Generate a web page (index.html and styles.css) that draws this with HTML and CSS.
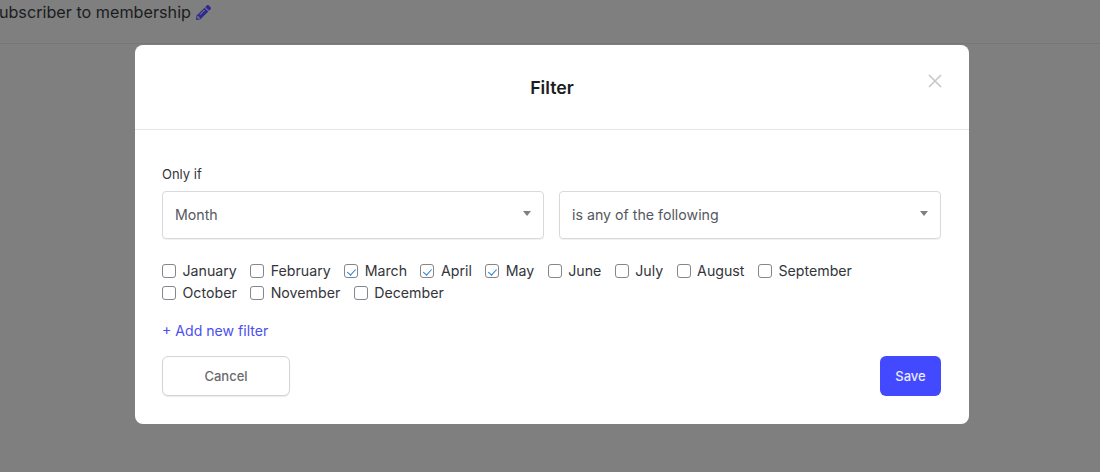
FILE: index.html
```html
<!DOCTYPE html>
<html lang="en">
<head>
<meta charset="utf-8">
<title>Filter</title>
<link rel="stylesheet" href="styles.css">
</head>
<body>
<header class="page-bar">
  <span class="page-title">Subscriber to membership</span>
  <svg class="pencil" viewBox="0 0 512 512" aria-hidden="true"><path d="M497.9 142.1l-46.1 46.1c-4.7 4.7-12.3 4.7-17 0l-111-111c-4.7-4.7-4.7-12.3 0-17l46.1-46.1c18.7-18.7 49.1-18.7 67.9 0l60.1 60.1c18.8 18.7 18.8 49.1 0 67.9zM284.2 99.8L21.6 362.4.4 483.9c-2.9 16.4 11.4 30.6 27.8 27.8l121.5-21.3 262.6-262.6c4.7-4.7 4.7-12.3 0-17l-111-111c-4.8-4.7-12.4-4.7-17.1 0zM124.1 339.9c-5.5-5.5-5.5-14.3 0-19.8l154-154c5.5-5.5 14.3-5.5 19.8 0s5.5 14.3 0 19.8l-154 154c-5.5 5.5-14.3 5.5-19.8 0zM88 424h48v36.3l-64.5 11.3-31.1-31.1L51.7 376H88v48z"/></svg>
</header>
<div class="backdrop">
  <section class="modal">
    <div class="modal-head">
      <h2 class="modal-title">Filter</h2>
      <svg class="close" viewBox="0 0 14 14" aria-hidden="true"><path d="M1 1l12 12M13 1L1 13"/></svg>
    </div>
    <div class="modal-body">
      <div class="field-label">Only if</div>
      <div class="selects">
        <div class="select">Month</div>
        <div class="select">is any of the following</div>
      </div>
      <div class="months">
        <label class="month"><input type="checkbox">January</label>
        <label class="month"><input type="checkbox">February</label>
        <label class="month"><input type="checkbox" checked>March</label>
        <label class="month"><input type="checkbox" checked>April</label>
        <label class="month"><input type="checkbox" checked>May</label>
        <label class="month"><input type="checkbox">June</label>
        <label class="month"><input type="checkbox">July</label>
        <label class="month"><input type="checkbox">August</label>
        <label class="month"><input type="checkbox">September</label>
        <label class="month"><input type="checkbox">October</label>
        <label class="month"><input type="checkbox">November</label>
        <label class="month"><input type="checkbox">December</label>
      </div>
      <a class="add-filter">+ Add new filter</a>
      <div class="actions">
        <button class="btn btn-cancel">Cancel</button>
        <button class="btn btn-save">Save</button>
      </div>
    </div>
  </section>
</div>
</body>
</html>
```
FILE: styles.css
```css
* { box-sizing: border-box; }
html, body { margin: 0; height: 100%; overflow: hidden; }
body { background: #7f7f7f; font-family: Inter, "Liberation Sans", sans-serif; color: #1f2024; }

.page-bar {
  height: 44px;
  border-bottom: 1px solid #767676;
  display: flex;
  align-items: flex-start;
  gap: 5px;
  padding: 2px 0 0;
  margin-left: -11.5px;
  font-size: 16.2px;
  line-height: 20px;
  color: #1b1c20;
}
.pencil { width: 15px; height: 15px; fill: #2f2a90; margin-top: 3px; }

.backdrop { position: absolute; left: 135px; top: 45px; }
.modal {
  width: 834px;
  height: 379px;
  background: #fff;
  border-radius: 8px;
}
.modal-head {
  height: 85px;
  border-bottom: 1px solid #e6e6e6;
  display: flex;
  align-items: center;
  justify-content: center;
  position: relative;
}
.modal-title { margin: 1px 0 0; font-size: 17.8px; line-height: 22px; font-weight: 600; color: #1c1d21; }
.close { position: absolute; right: 27px; top: 29px; width: 14px; height: 14px; stroke: #c8c8c8; stroke-width: 1.7; fill: none; }

.modal-body { padding: 36px 28px 0 27px; }
.field-label { font-size: 13px; line-height: 16px; color: #33353a; margin-bottom: 9px; }
.selects { display: flex; gap: 15px; }
.select {
  flex: 1;
  height: 48px;
  border: 1px solid #d8d8de;
  border-radius: 4px;
  box-shadow: 0 1px 1px rgba(0,0,0,.06);
  padding: 0 12px;
  display: flex;
  align-items: center;
  justify-content: space-between;
  font-size: 14.2px;
  line-height: 20px;
  color: #55585e;
}
.select::after {
  content: "";
  border-left: 4px solid transparent;
  border-right: 4px solid transparent;
  border-top: 5px solid #808080;
  margin: -3px 0 0 0;
}

.months { display: flex; flex-wrap: wrap; column-gap: 13.4px; margin-top: 21px; width: 720px; }
.month { display: flex; align-items: center; height: 22px; font-size: 14.2px; line-height: 20px; color: #33353a; }
.month input {
  appearance: none;
  width: 14px;
  height: 14px;
  margin: 0 6.5px 0 0;
  border: 1px solid #85858b;
  border-radius: 3px;
  background: #fff;
  position: relative;
}
.month input:checked::after {
  content: "";
  position: absolute;
  left: 4px;
  top: 1.6px;
  width: 3.6px;
  height: 7px;
  border: solid #2a7fd0;
  border-width: 0 1.8px 1.8px 0;
  transform: rotate(42deg);
}

.add-filter { display: block; margin-top: 17px; font-size: 14.1px; line-height: 20px; color: #4a4ff0; }

.actions { display: flex; justify-content: space-between; margin-top: 15px; }
.btn { height: 40px; border-radius: 6px; font-family: inherit; font-size: 13px; font-weight: 500; }
.btn-cancel {
  width: 128px;
  background: #fff;
  border: 1px solid #d4d4d4;
  box-shadow: 0 1px 1px rgba(0,0,0,.08);
  color: #6a6a6e;
}
.btn-save { width: 61px; background: #4349ff; border: 0; color: #e9e9ff; }
```
